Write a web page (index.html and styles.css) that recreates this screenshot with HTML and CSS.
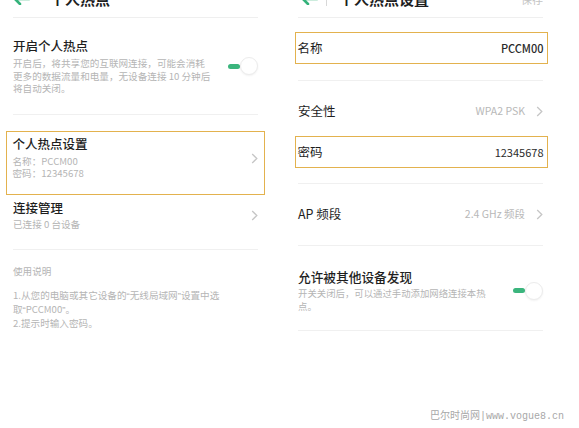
FILE: index.html
```html
<!DOCTYPE html>
<html lang="zh">
<head>
<meta charset="utf-8">
<title>个人热点</title>
<link rel="stylesheet" href="styles.css">
</head>
<body>
<div class="screen">
  <section class="panel left">
    <header class="hdr">
      <div class="hdr-in">
        <svg class="back" width="18" height="12" viewBox="0 0 18 12"><path d="M17 6H3M8 1L3 6L8 11" fill="none" stroke="#34b27a" stroke-width="2.6" stroke-linecap="round" stroke-linejoin="round"/></svg>
        <span class="hdr-title">个人热点</span>
      </div>
    </header>

    <div class="row switch-row">
      <div class="txt">
        <div class="title">开启个人热点</div>
        <div class="desc">开启后，将共享您的互联网连接，可能会消耗<br>更多的数据流量和电量，无设备连接 10 分钟后<br>将自动关闭。</div>
      </div>
      <div class="toggle"><span class="bar"></span><span class="knob"></span></div>
    </div>

    <div class="hl hl-left">
      <div class="txt">
        <div class="title">个人热点设置</div>
        <div class="desc">名称：PCCM00<br>密码：12345678</div>
      </div>
      <svg class="chev" width="7" height="11" viewBox="0 0 7 11"><path d="M1.2 1L5.8 5.5L1.2 10" fill="none" stroke="#c6c6c6" stroke-width="1.3"/></svg>
    </div>

    <div class="row conn-row">
      <div class="txt">
        <div class="title">连接管理</div>
        <div class="desc">已连接 0 台设备</div>
      </div>
      <svg class="chev" width="7" height="11" viewBox="0 0 7 11"><path d="M1.2 1L5.8 5.5L1.2 10" fill="none" stroke="#c6c6c6" stroke-width="1.3"/></svg>
    </div>

    <div class="help">
      <div class="help-h">使用说明</div>
      <div class="help-t">1.从您的电脑或其它设备的<span class="q">“</span>无线局域网<span class="q">”</span>设置中选<br>取<span class="q">“</span>PCCM00<span class="q">”</span>。<br>2.提示时输入密码。</div>
    </div>
  </section>

  <section class="panel right">
    <header class="hdr">
      <div class="hdr-in">
        <svg class="back" width="18" height="12" viewBox="0 0 18 12"><path d="M17 6H3M8 1L3 6L8 11" fill="none" stroke="#34b27a" stroke-width="2.6" stroke-linecap="round" stroke-linejoin="round"/></svg>
        <span class="sep"></span>
        <span class="hdr-title">个人热点设置</span>
        <span class="save">保存</span>
      </div>
    </header>

    <div class="row name-row">
      <div class="hl hl-right">
        <span class="label">名称</span>
        <span class="val strong">PCCM00</span>
      </div>
    </div>

    <div class="sec-row">
      <span class="label">安全性</span>
      <span class="val muted">WPA2 PSK</span>
      <svg class="chev" width="7" height="11" viewBox="0 0 7 11"><path d="M1.2 1L5.8 5.5L1.2 10" fill="none" stroke="#c6c6c6" stroke-width="1.3"/></svg>
    </div>

    <div class="row pwd-row">
      <div class="hl hl-right">
        <span class="label">密码</span>
        <span class="val">12345678</span>
      </div>
    </div>

    <div class="row ap-row">
      <span class="label">AP 频段</span>
      <span class="val muted">2.4 GHz 频段</span>
      <svg class="chev" width="7" height="11" viewBox="0 0 7 11"><path d="M1.2 1L5.8 5.5L1.2 10" fill="none" stroke="#c6c6c6" stroke-width="1.3"/></svg>
    </div>

    <div class="row disc-row">
      <div class="txt">
        <div class="title">允许被其他设备发现</div>
        <div class="desc">开关关闭后，可以通过手动添加网络连接本热<br>点。</div>
      </div>
      <div class="toggle"><span class="bar"></span><span class="knob"></span></div>
    </div>
  </section>

  <div class="watermark">巴尔时尚网|www.vogue8.cn</div>
</div>
</body>
</html>
```

FILE: styles.css
```css
* { box-sizing: border-box; }
html, body { margin: 0; padding: 0; background: #fff; }
body {
  font-family: "Noto Sans CJK SC", "Noto Sans", "Liberation Sans", sans-serif;
  color: #222;
  overflow: hidden;
}
.screen {
  position: relative;
  width: 579px;
  height: 428px;
  display: flex;
  overflow: hidden;
}
.panel { display: flex; flex-direction: column; }
.left { width: 290px; padding: 0 32px 0 13px; }
.right { width: 289px; padding: 0 36px 0 8px; }

.hdr {
  height: 18px;
  border-bottom: 1px solid #efefef;
  overflow: hidden;
}
.hdr-in {
  display: flex;
  align-items: center;
  height: 18px;
  margin-top: -10px;
}
.left .hdr-in { margin-left: -1px; }
.back { flex: none; }
.hdr-title {
  font-size: 15px;
  font-weight: 700;
  line-height: 18px;
  color: #1e1e1e;
  margin-left: 20px;
}
.right .hdr-in { margin-left: 2px; }
.sep { width: 1px; height: 14px; background: #d8d8d8; margin-left: 8px; }
.right .hdr-title { margin-left: 12px; }
.save { margin-left: auto; font-size: 11px; color: #c4c4c4; line-height: 18px; }

.row {
  display: flex;
  align-items: center;
  border-bottom: 1px solid #f0f0f0;
}
.txt { flex: 1; }
.title {
  font-size: 12.5px;
  line-height: 16px;
  font-weight: 500;
  color: #1e1e1e;
}
.desc {
  font-size: 9.6px;
  line-height: 12.6px;
  color: #b5b5b5;
  margin-top: 3px;
  white-space: nowrap;
}

.switch-row { padding: 20px 0 19px; }

.toggle { flex: none; position: relative; width: 30px; height: 18px; display: flex; align-items: center; }
.toggle .bar { width: 12px; height: 4.5px; border-radius: 3px; background: #3bb57d; }
.toggle .knob {
  width: 18px; height: 18px; border-radius: 50%;
  background: #fff;
  border: 1px solid #ececec;
  box-shadow: 0 1px 2px rgba(0,0,0,0.06);
}

.hl {
  display: flex;
  align-items: center;
  border: 1.5px solid #e3b24e;
}
.hl-left {
  margin: 16px -7px 0 -7px;
  padding: 3.5px 6px 13px 5.5px;
  height: 64px;
}
.hl-left .desc { margin-top: 2.5px; }

.chev { flex: none; }

.conn-row { padding: 5px 0 19px; }
.conn-row .desc { margin-top: 2px; }

.help { padding-top: 15px; }
.help-h { font-size: 9.6px; line-height: 13px; color: #b5b5b5; }
.help-t { font-size: 9.6px; line-height: 12.8px; color: #b5b5b5; margin-top: 11px; white-space: nowrap; }
.q { font-family: "Liberation Sans", sans-serif; }

.label { font-size: 12.5px; line-height: 16px; color: #1e1e1e; }
.val { margin-left: auto; font-size: 11px; line-height: 16px; color: #2a2a2a; }
.val.strong { font-weight: 500; }
.val.muted { color: #b8b8b8; font-size: 10.5px; margin-right: 11px; }

.hl-right {
  flex: 1;
  margin: 0 -5px 0 -3px;
  padding: 0 3.5px 0 1.5px;
  height: 32px;
}
.name-row { padding: 14px 0 16px; }
.sec-row { display: flex; align-items: center; padding: 22px 0 0; }
.pwd-row { padding: 17px 0 15px; }
.ap-row { padding: 22px 0 23px; }
.disc-row { padding: 23px 0 18px; }
.disc-row .title { font-size: 12.7px; }
.disc-row .desc { font-size: 9.4px; line-height: 12.6px; margin-top: 2px; }

.watermark {
  position: absolute;
  left: 430px;
  top: 411px;
  font-family: "Liberation Mono", "Noto Sans CJK SC", monospace;
  font-size: 10px;
  line-height: 12px;
  color: #a8a8a8;
  white-space: nowrap;
}
```
